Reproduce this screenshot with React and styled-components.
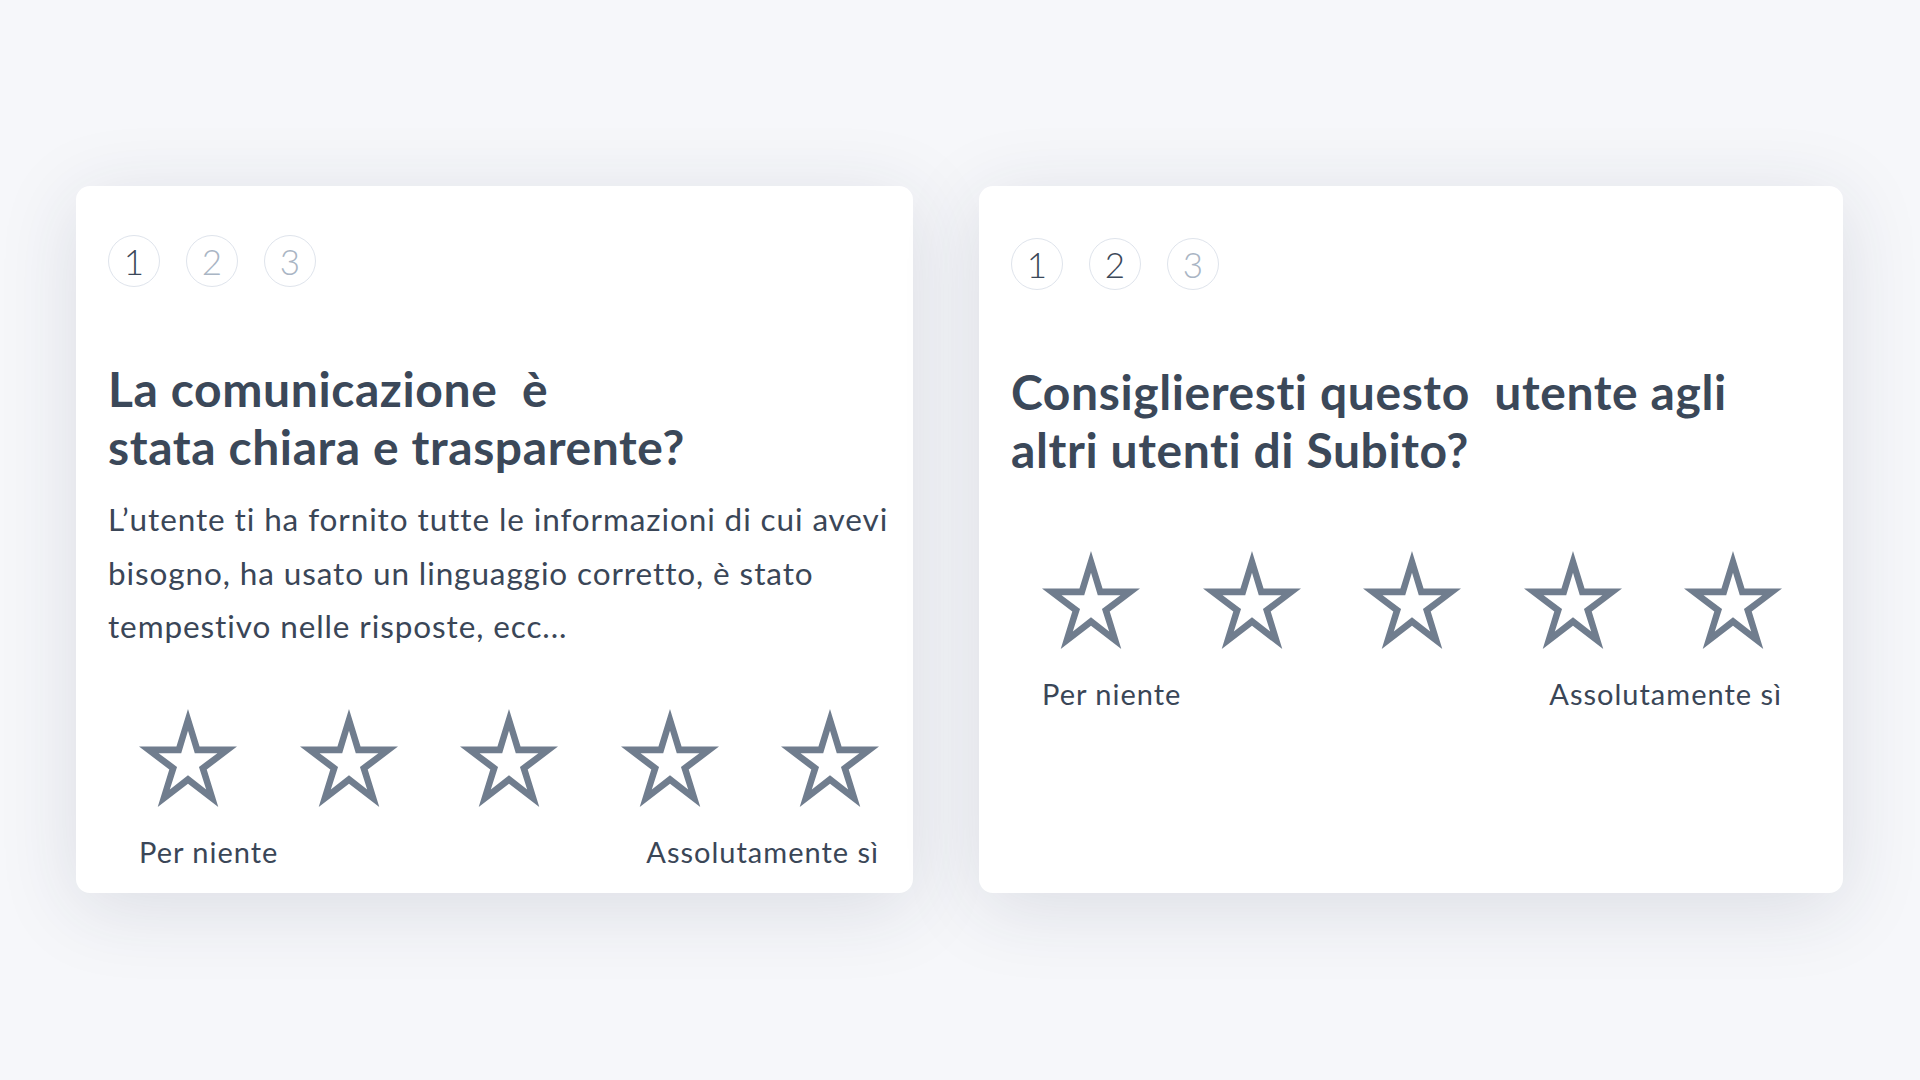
import styled, { createGlobalStyle } from 'styled-components';

const GlobalStyle = createGlobalStyle`
  body {
    margin: 0;
    background: #f6f7fa;
    font-family: Lato, "Noto Sans", sans-serif;
  }
`;

const cards = [
  {
    width: 837,
    top: 49,
    active: 1,
    title: ['La comunicazione\u00a0 è', 'stata chiara e trasparente?'],
    body: [
      'L’utente ti ha fornito tutte le informazioni di cui avevi',
      'bisogno, ha usato un linguaggio corretto, è stato',
      'tempestivo nelle risposte, ecc...',
    ],
    starsGap: 55,
  },
  {
    width: 864,
    top: 52,
    active: 2,
    title: ['Consiglieresti questo\u00a0 utente agli', 'altri utenti di Subito?'],
    body: null,
    starsGap: 72,
  },
];

const Page = styled.main`
  min-height: 100vh;
  box-sizing: border-box;
  display: flex;
  align-items: flex-start;
  gap: 66px;
  padding: 186px 0 0 76px;
`;

const Card = styled.section`
  width: ${(p) => p.$width}px;
  height: 707px;
  box-sizing: border-box;
  padding: ${(p) => p.$top}px 32px 0;
  background: #fff;
  border-radius: 14px;
  box-shadow: 0 14px 80px rgba(36, 48, 78, 0.13);
  display: flex;
  flex-direction: column;
`;

const Steps = styled.div`
  display: flex;
  gap: 26px;
`;

const Step = styled.span`
  width: 52px;
  height: 52px;
  box-sizing: border-box;
  border: 1.5px solid #dfe4ec;
  border-radius: 50%;
  display: flex;
  align-items: center;
  justify-content: center;
  font-size: 35px;
  font-weight: 300;
  color: ${(p) => (p.$active ? '#3b4859' : '#a9b5c4')};
`;

const Title = styled.h2`
  margin: 73px 0 0;
  font-size: 48px;
  line-height: 58px;
  font-weight: 700;
  letter-spacing: 0.6px;
  color: #3b4859;
  white-space: nowrap;
`;

const Body = styled.p`
  margin: 17px 0 0;
  font-size: 31.5px;
  line-height: 53.5px;
  font-weight: 400;
  letter-spacing: 0.9px;
  color: #3a4657;
  white-space: nowrap;
`;

const Stars = styled.div`
  width: 740px;
  margin: ${(p) => p.$gap}px 0 0 31px;
  display: flex;
  justify-content: space-between;
`;

const StarButton = styled.button`
  width: 98px;
  height: 98px;
  padding: 0;
  border: 0;
  background: none;
  cursor: pointer;

  svg {
    display: block;
    width: 100%;
    height: 100%;
  }
`;

const Labels = styled.div`
  width: 740px;
  margin: 28px 0 0 31px;
  display: flex;
  justify-content: space-between;
  font-size: 29px;
  line-height: 34px;
  font-weight: 400;
  letter-spacing: 1px;
  color: #3a4657;
`;

// five-point outline star: outer contour minus a smaller inner star
const CX = 50 * Math.sin((2 * Math.PI) / 5);
const CY = 50;
const ring = (R, r) =>
  Array.from({ length: 10 }, (_, i) => {
    const a = -Math.PI / 2 + (i * Math.PI) / 5;
    const rad = i % 2 === 0 ? R : r;
    return `${(CX + rad * Math.cos(a)).toFixed(2)},${(CY + rad * Math.sin(a)).toFixed(2)}`;
  });
const starPath = `M${ring(50, 19.1).join('L')}Z M${ring(30, 11.2).join('L')}Z`;

function Star() {
  return (
    <StarButton type="button" aria-label="stella">
      <svg viewBox={`0 0 ${(2 * CX).toFixed(2)} 90.45`} preserveAspectRatio="none">
        <path d={starPath} fill="#707d8e" fillRule="evenodd" />
      </svg>
    </StarButton>
  );
}

export default function App() {
  return (
    <>
      <GlobalStyle />
      <Page>
        {cards.map((card, i) => (
          <Card key={i} $width={card.width} $top={card.top}>
            <Steps>
              {[1, 2, 3].map((n) => (
                <Step key={n} $active={n <= card.active}>
                  {n}
                </Step>
              ))}
            </Steps>
            <Title>
              {card.title[0]}
              <br />
              {card.title[1]}
            </Title>
            {card.body && (
              <Body>
                {card.body.map((line, j) => (
                  <span key={j}>
                    {line}
                    {j < card.body.length - 1 && <br />}
                  </span>
                ))}
              </Body>
            )}
            <Stars $gap={card.starsGap}>
              {[1, 2, 3, 4, 5].map((n) => (
                <Star key={n} />
              ))}
            </Stars>
            <Labels>
              <span>Per niente</span>
              <span>Assolutamente sì</span>
            </Labels>
          </Card>
        ))}
      </Page>
    </>
  );
}
